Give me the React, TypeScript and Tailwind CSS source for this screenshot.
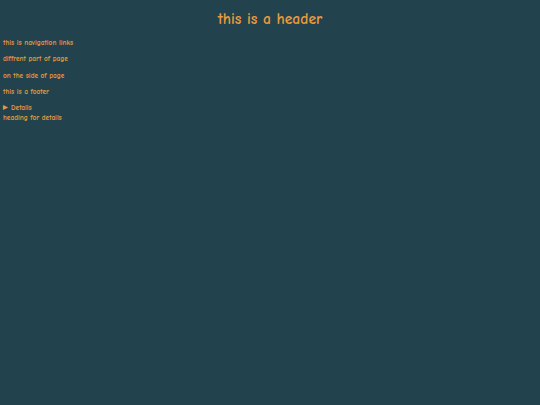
export default function App() {
  const f = { fontFamily: '"Comic Sans MS", "Comic Neue", "Open Sans", sans-serif' };
  return (
    <div className="w-[540px] h-[405px] bg-[#22424e] text-[#e89a3c] overflow-hidden" style={f}>
      <header className="pt-[10px] h-[35px] text-center">
        <h1 className="text-[15.6px] font-bold leading-[19px]">this is a header</h1>
      </header>
      <nav className="pl-[3px] text-[7.3px] leading-[9px] font-semibold">
        <p className="mt-[3px]">this is navigation links</p>
      </nav>
      <main className="pl-[3px] text-[7.3px] leading-[9px] font-semibold">
        <p className="mt-[7.4px]">diffrent part of page</p>
      </main>
      <aside className="pl-[3px] text-[7.3px] leading-[9px] font-semibold">
        <p className="mt-[7.4px]">on the side of page</p>
      </aside>
      <footer className="pl-[3px] text-[7.3px] leading-[9px] font-semibold">
        <p className="mt-[7.4px]">this is a footer</p>
      </footer>
      <details open className="pl-[3px] text-[7.3px] leading-[9px] mt-[6.6px] font-semibold">
        <summary className="list-none flex items-center">
          <span className="text-[5.5px] mr-[3px]">▶</span>Details
        </summary>
      </details>
      <div className="pl-[3px] text-[7.3px] leading-[9px] mt-[1px] font-semibold">heading for details</div>
    </div>
  );
}
